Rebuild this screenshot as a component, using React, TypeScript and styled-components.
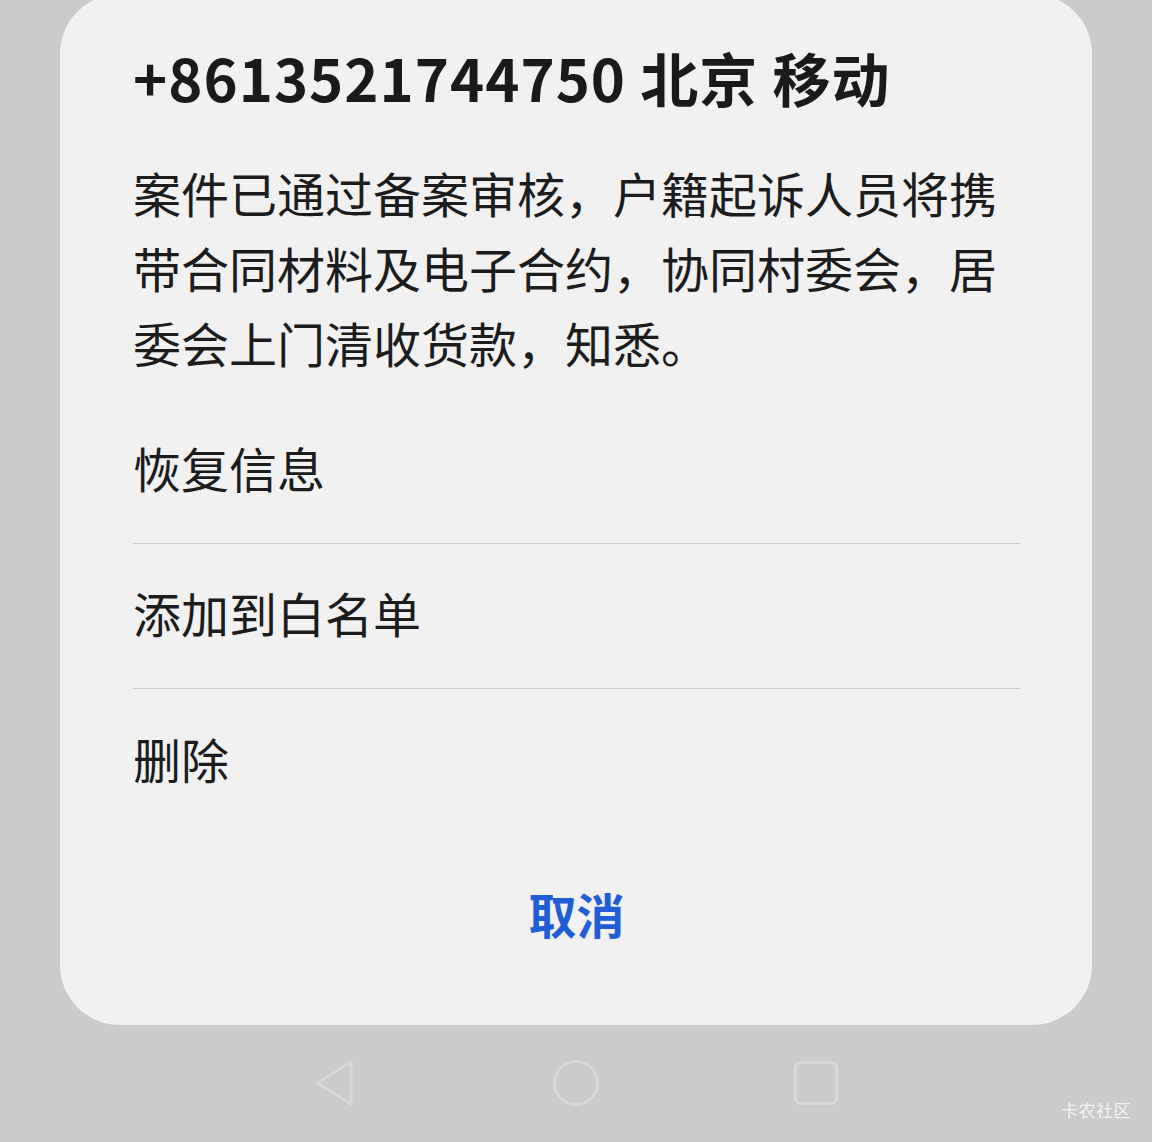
import React from 'react';
import styled, { createGlobalStyle } from 'styled-components';

const GlobalStyle = createGlobalStyle`
  html, body {
    margin: 0;
    padding: 0;
    background: #cbcbcb;
  }
  body {
    font-family: "Noto Sans CJK SC", "Noto Sans", sans-serif;
  }
`;

const Screen = styled.div`
  position: relative;
  width: 1152px;
  height: 1142px;
  overflow: hidden;
  background: #cbcbcb;
  display: flex;
  flex-direction: column;
`;

const Sheet = styled.div`
  margin: -6px 60px 0;
  height: 1031px;
  box-sizing: border-box;
  padding: 43px 72px 0 73px;
  background: #f1f1f1;
  border-radius: 60px;
  display: flex;
  flex-direction: column;
`;

const Title = styled.div`
  font-size: 58px;
  line-height: 80px;
  font-weight: 600;
  letter-spacing: 1px;
  color: #1a1a1a;
  white-space: nowrap;
`;

const Message = styled.p`
  margin: 38px 0 0;
  font-size: 48px;
  line-height: 75px;
  color: #1c1c1c;
`;

const Menu = styled.div`
  margin-top: 19px;
  display: flex;
  flex-direction: column;
`;

const MenuItem = styled.div<{ $last?: boolean }>`
  height: 145px;
  box-sizing: border-box;
  padding-bottom: 8px;
  display: flex;
  align-items: center;
  font-size: 48px;
  color: #1c1c1c;
  border-bottom: ${(p) => (p.$last ? 'none' : '1px solid #c8c8c8')};
`;

const Cancel = styled.div`
  margin-top: 39px;
  height: 80px;
  display: flex;
  align-items: center;
  justify-content: center;
  font-size: 48px;
  font-weight: 600;
  color: #1f5ed5;
`;

const NavBar = styled.div`
  flex: 1;
  display: flex;
  align-items: center;
  justify-content: center;
  padding-bottom: 2px;
`;

const NavCell = styled.div`
  width: 240px;
  display: flex;
  justify-content: center;
`;

const Watermark = styled.div`
  position: absolute;
  right: 21px;
  bottom: 20px;
  font-size: 17px;
  color: #f4f4f4;
  letter-spacing: 0.5px;
`;

const navStroke = '#d8d8d8';

const BackIcon = () => (
  <svg width="46" height="48" viewBox="0 0 46 48">
    <path
      d="M38 3 L4 24 L38 45 Z"
      fill="none"
      stroke={navStroke}
      strokeWidth="3"
      strokeLinejoin="round"
    />
  </svg>
);

const HomeIcon = () => (
  <svg width="48" height="48" viewBox="0 0 48 48">
    <circle cx="24" cy="24" r="21.5" fill="none" stroke={navStroke} strokeWidth="3" />
  </svg>
);

const RecentIcon = () => (
  <svg width="46" height="46" viewBox="0 0 46 46">
    <rect x="2.5" y="2.5" width="41" height="41" rx="5" fill="none" stroke={navStroke} strokeWidth="3" />
  </svg>
);

const App: React.FC = () => {
  return (
    <Screen>
      <GlobalStyle />
      <Sheet>
        <Title>+8613521744750 北京 移动</Title>
        <Message>
          案件已通过备案审核，户籍起诉人员将携带合同材料及电子合约，协同村委会，居委会上门清收货款，知悉。
        </Message>
        <Menu>
          <MenuItem>恢复信息</MenuItem>
          <MenuItem>添加到白名单</MenuItem>
          <MenuItem $last>删除</MenuItem>
        </Menu>
        <Cancel>取消</Cancel>
      </Sheet>
      <NavBar>
        <NavCell>
          <BackIcon />
        </NavCell>
        <NavCell>
          <HomeIcon />
        </NavCell>
        <NavCell>
          <RecentIcon />
        </NavCell>
      </NavBar>
      <Watermark>卡农社区</Watermark>
    </Screen>
  );
};

export default App;
